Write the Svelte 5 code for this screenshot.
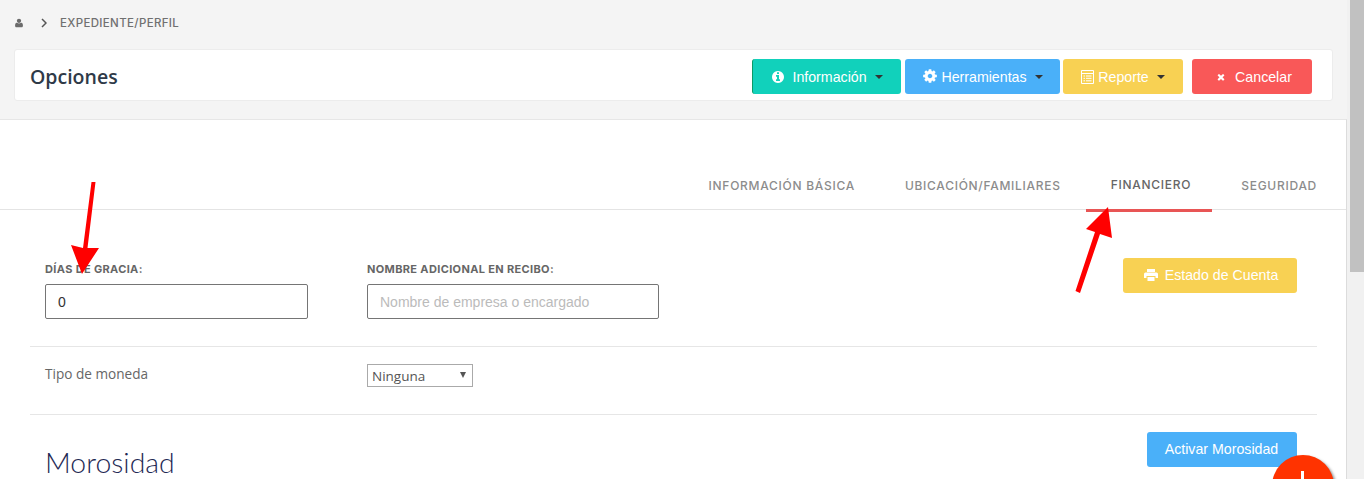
<script>
  const gear = "M1152 896q0-106-75-181t-181-75-181 75-75 181 75 181 181 75 181-75 75-181zm512-109v222q0 12-8 23t-20 13l-185 28q-19 54-39 91 35 50 107 138 10 12 10 25t-9 23q-27 37-99 108t-94 71q-12 0-26-9l-138-108q-44 23-91 38-16 136-29 186-7 28-36 28h-222q-14 0-24.5-8.5t-11.5-21.5l-28-184q-49-16-90-37l-141 107q-10 9-25 9-14 0-25-11-126-114-165-168-7-10-7-23 0-12 8-23 15-21 51-66.5t54-70.5q-27-50-41-99l-183-27q-13-2-21-12.5t-8-23.5v-222q0-12 8-23t19-13l186-28q14-46 39-92-40-57-107-138-10-12-10-24 0-10 9-23 26-36 98.5-107.5t94.5-71.5q13 0 26 10l138 107q44-23 91-38 16-136 29-186 7-28 36-28h222q14 0 24.5 8.5t11.5 21.5l28 184q49 16 90 37l142-107q9-9 24-9 13 0 25 10 129 119 165 170 7 8 7 22 0 12-8 23-15 21-51 66.5t-54 70.5q26 50 41 98l183 28q13 2 21 12.5t8 23.5z";
  const user = "M1600 1405q0 120-73 189.5t-194 69.5h-874q-121 0-194-69.5t-73-189.5q0-53 3.5-103.5t14-109 26.5-108.5 43-97.5 62-81 85.5-53.5 111.5-20q9 0 42 21.5t74.5 48 108 48 133.5 21.5 133.5-21.5 108-48 74.5-48 42-21.5q61 0 111.5 20t85.5 53.5 62 81 43 97.5 26.5 108.5 14 109 3.5 103.5zm-320-893q0 159-112.5 271.5t-271.5 112.5-271.5-112.5-112.5-271.5 112.5-271.5 271.5-112.5 271.5 112.5 112.5 271.5z";
  const info = "M1152 1376v-160q0-14-9-23t-23-9h-96v-512q0-14-9-23t-23-9h-320q-14 0-23 9t-9 23v160q0 14 9 23t23 9h96v320h-96q-14 0-23 9t-9 23v160q0 14 9 23t23 9h448q14 0 23-9t9-23zm-128-896v-160q0-14-9-23t-23-9h-192q-14 0-23 9t-9 23v160q0 14 9 23t23 9h192q14 0 23-9t9-23zm640 416q0 209-103 385.5t-279.5 279.5-385.5 103-385.5-103-279.5-279.5-103-385.5 103-385.5 279.5-279.5 385.5-103 385.5 103 279.5 279.5 103 385.5z";
  const times = "M1490 1322q0 40-28 68l-136 136q-28 28-68 28t-68-28l-294-294-294 294q-28 28-68 28t-68-28l-136-136q-28-28-28-68t28-68l294-294-294-294q-28-28-28-68t28-68l136-136q28-28 68-28t68 28l294 294 294-294q28-28 68-28t68 28l136 136q28 28 28 68t-28 68l-294 294 294 294q28 28 28 68z";
  const tabs = [
    { label: "INFORMACIÓN BÁSICA" },
    { label: "UBICACIÓN/FAMILIARES" },
    { label: "FINANCIERO", active: true },
    { label: "SEGURIDAD" }
  ];
</script>

<div class="shell">
  <div class="page">
    <nav class="crumbs">
      <svg class="crumb-user" viewBox="0 0 1792 1792"><path d={user} /></svg>
      <svg class="crumb-chev" viewBox="0 0 6 10"><path d="M1 1l4 4-4 4" /></svg>
      <span class="crumb-text">EXPEDIENTE/PERFIL</span>
    </nav>

    <header class="bar">
      <h1>Opciones</h1>
      <div class="actions">
        <button class="btn teal w-info">
          <svg class="ic" viewBox="0 0 1792 1792"><path d={info} /></svg>
          <span class="sp7">Información</span><i class="caret"></i>
        </button>
        <button class="btn blue w-tools">
          <svg class="ic gear" viewBox="0 0 1792 1792"><path d={gear} /></svg>
          <span class="sp3">Herramientas</span><i class="caret"></i>
        </button>
        <button class="btn yellow w-rep">
          <svg class="ic list" viewBox="0 0 14 14"><path d="M.5.5h12v13H.5zM.5 3.500h12M2.500 6h1.500M5 6h5.500M2.500 8.300h1.500M5 8.300h5.500M2.500 10.800h1.500M5 10.800h5.500" /></svg>
          <span class="sp3">Reporte</span><i class="caret"></i>
        </button>
        <button class="btn red w-cancel">
          <svg class="ic x" viewBox="0 0 1792 1792"><path d={times} /></svg>
          <span class="sp10">Cancelar</span>
        </button>
      </div>
    </header>

    <main class="card">
      <ul class="tabs">
        {#each tabs as t}
          <li class:active={t.active}>{t.label}</li>
        {/each}
      </ul>

      <div class="content">
        <section class="row first">
          <div class="field f1">
            <label for="dias">DÍAS DE GRACIA:</label>
            <input id="dias" value="0" />
          </div>
          <div class="field f2">
            <label for="nombre">NOMBRE ADICIONAL EN RECIBO:</label>
            <input id="nombre" placeholder="Nombre de empresa o encargado" />
          </div>
          <button class="btn yellow w-estado">
            <svg class="ic printer" viewBox="0 0 14 12"><path d="M3 0h8v3H3zM1.500 3.500h11A1.500 1.500 0 0 1 14 5v4h-2.500V7h-9v2H0V5a1.500 1.500 0 0 1 1.500-1.500zM3.500 8h7v4h-7z" /></svg>
            <span class="sp7">Estado de Cuenta</span>
          </button>
        </section>

        <section class="row second">
          <span class="tipo">Tipo de moneda</span>
          <div class="select-wrap">
            <select><option>Ninguna</option></select>
          </div>
        </section>

        <section class="row third">
          <h2>Morosidad</h2>
          <button class="btn blue w-activar">Activar Morosidad</button>
        </section>
      </div>
    </main>
  </div>

  <div class="scrollbar"><div class="thumb"></div></div>

  <div class="fab"><span class="plus"></span></div>

  <svg class="marks" viewBox="0 0 1364 479" width="1364" height="479">
    <path d="M95.500 182 L91.500 182 L83 248 L71 245 L82 274 L99 248 L87.500 248 Z" />
    <path d="M1075.500 291 L1080 293 L1100 234 L1112 238 L1108 207 L1086 229 L1095 232 Z" />
  </svg>
</div>

<style>
  :global(body) { margin: 0; background: #f4f4f4; }
  .shell {
    position: relative;
    display: flex;
    width: 1364px;
    height: 479px;
    overflow: hidden;
    background: #f4f4f4;
    font-family: "Liberation Sans", Arial, sans-serif;
  }
  .page { width: 1347px; flex: none; }

  .crumbs { height: 49px; display: flex; align-items: center; padding: 0 0 3px 14px; box-sizing: border-box; }
  .crumb-user { width: 10px; height: 10px; fill: #6b6b6b; }
  .crumb-chev { width: 6px; height: 10px; margin-left: 17px; fill: none; stroke: #555; stroke-width: 1.500; }
  .crumb-text {
    margin-left: 13px;
    font-family: Inter, "Open Sans", sans-serif;
    font-size: 11.500px;
    font-weight: 500;
    letter-spacing: 0.350px;
    color: #707070;
  }

  .bar {
    margin-left: 14px;
    width: 1319px;
    height: 52px;
    box-sizing: border-box;
    background: #fff;
    border: 1px solid #ececec;
    border-radius: 3px;
    display: flex;
    align-items: center;
    justify-content: space-between;
    padding: 3px 20px 0 15px;
  }
  h1 {
    margin: 0;
    font-family: "Open Sans", sans-serif;
    font-size: 19.500px;
    font-weight: 600;
    color: #2f3a48;
  }
  .actions { display: flex; height: 35px; }

  .btn {
    height: 35px;
    border: 0;
    border-radius: 3px;
    padding: 0;
    color: #fff;
    font-family: "Liberation Sans", Arial, sans-serif;
    font-size: 14.200px;
    display: inline-flex;
    align-items: center;
    justify-content: center;
    flex: none;
  }
  .teal { background: #11d1bb; border-left: 1px solid #0b9a66; }
  .blue { background: #4ab0f9; }
  .yellow { background: #f8d153; }
  .red { background: #f95858; }
  .w-info { width: 149px; }
  .w-tools { width: 155px; margin-left: 4px; }
  .w-rep { width: 120px; margin-left: 3px; }
  .w-cancel { width: 120px; margin-left: 9px; padding-left: 4px; }
  .w-estado { width: 174px; margin-left: auto; margin-right: 20px; margin-top: 48px; padding: 0 0 2px 2px; }
  .w-activar { width: 150px; margin-right: 20px; margin-top: 17px; padding: 0 1px 2px 0; }

  .ic { width: 14px; height: 14px; fill: #fff; flex: none; }
  .gear { width: 16px; height: 16px; margin-bottom: 1px; }
  .list { width: 14px; height: 14px; fill: none; stroke: #fff; stroke-width: 1; }
  .x { width: 10px; height: 10px; }
  .printer { width: 14px; height: 12px; }
  .sp7 { margin-left: 7px; }
  .sp3 { margin-left: 3px; }
  .sp10 { margin-left: 9px; }
  .caret {
    width: 0;
    height: 0;
    margin-left: 8px;
    margin-top: 1px;
    border-left: 4.500px solid transparent;
    border-right: 4.500px solid transparent;
    border-top: 4px solid #333;
  }

  .card {
    margin-top: 18px;
    height: 360px;
    background: #fff;
    border-top: 1px solid #e6e6e6;
    border-right: 1px solid #dcdcdc;
    box-sizing: border-box;
  }
  .tabs {
    margin: 0;
    padding: 0 29px 0 0;
    list-style: none;
    height: 90px;
    box-sizing: border-box;
    border-bottom: 1px solid #e4e4e4;
    display: flex;
    justify-content: flex-end;
    align-items: flex-end;
  }
  .tabs li {
    margin-left: 25px;
    padding: 0 0 16px 0;
    height: 34px;
    box-sizing: border-box;
    margin-bottom: -1px;
    font-family: Inter, "Open Sans", sans-serif;
    font-size: 12px;
    font-weight: 500;
    letter-spacing: 0.720px;
    line-height: 19px;
    color: #8c8c8c;
    border-bottom: 3px solid transparent;
    margin-right: 25px;
  }
  .tabs li:last-child { margin-right: 0; }
  .tabs li.active {
    color: #666;
    border-bottom: 3px solid #e85555;
    height: 37px;
    margin-bottom: -3px;
    margin-left: 0;
    margin-right: 4px;
    padding-left: 25px;
    padding-right: 21px;
    padding-bottom: 16px;
  }

  .content { padding: 0 29px 0 30px; }
  .row { display: flex; border-bottom: 1px solid #e6e6e6; box-sizing: border-box; }
  .first { height: 137px; align-items: flex-start; }
  .second { height: 68px; align-items: flex-start; }
  .third { border-bottom: 0; justify-content: space-between; align-items: flex-start; }

  .field { margin-top: 52px; }
  .f1 { margin-left: 15px; width: 263px; }
  .f2 { margin-left: 59px; width: 292px; }
  label {
    display: block;
    height: 22px;
    line-height: 14px;
    font-family: Inter, "Open Sans", sans-serif;
    font-size: 11px;
    font-weight: 700;
    letter-spacing: 0.350px;
    color: #666;
  }
  input {
    display: block;
    width: 100%;
    height: 35px;
    box-sizing: border-box;
    border: 1px solid #757575;
    border-radius: 2px;
    padding: 0 12px;
    font-family: "Liberation Sans", Arial, sans-serif;
    font-size: 14px;
    color: #333;
    background: #fff;
    outline: none;
  }
  input::placeholder { color: #bbb; opacity: 1; }

  .tipo {
    margin-left: 15px;
    width: 322px;
    margin-top: 17px;
    font-family: "Open Sans", sans-serif;
    font-size: 13.600px;
    line-height: 20px;
    color: #666;
  }
  .select-wrap { position: relative; width: 106px; height: 23px; margin-top: 17px; }
  .select-wrap::after {
    content: "";
    position: absolute;
    right: 7px;
    top: 8px;
    border-left: 3.500px solid transparent;
    border-right: 3.500px solid transparent;
    border-top: 6px solid #555;
    pointer-events: none;
  }
  select {
    width: 100%;
    height: 100%;
    appearance: none;
    border: 1px solid #aaa;
    border-radius: 0;
    padding: 1px 0 0 4px;
    background: #fff;
    font-family: "Open Sans", sans-serif;
    font-size: 13.500px;
    color: #555;
  }

  h2 {
    margin: 32px 0 0 15px;
    font-family: Lato, "Open Sans", sans-serif;
    font-size: 28.400px;
    font-weight: 300;
    line-height: 30px;
    color: #1f2a55;
  }

  .scrollbar { flex: 1; background: #f1f1f1; padding-left: 3px; }
  .thumb { height: 272px; background: #c1c1c1; }

  .fab {
    position: absolute;
    left: 1272px;
    top: 455px;
    width: 62px;
    height: 62px;
    border-radius: 50%;
    background: #ff3300;
    box-shadow: 2px 2px 3px rgba(0, 0, 0, 0.45);
  }
  .plus { position: absolute; left: 29px; top: 16px; width: 3px; height: 20px; background: #fff; }
  .plus::after { content: ""; position: absolute; left: -8px; top: 8.500px; width: 19px; height: 3px; background: #fff; }

  .marks { position: absolute; left: 0; top: 0; pointer-events: none; }
  .marks path { fill: #ff0000; }
</style>
